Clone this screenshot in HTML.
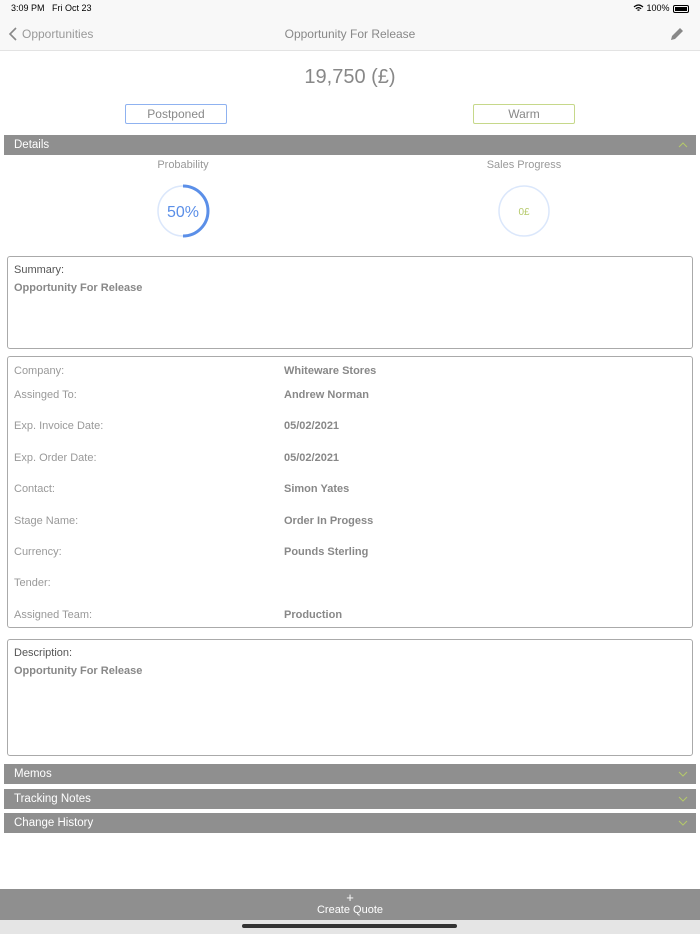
<!DOCTYPE html><html><head><meta charset="utf-8"><style>
*{margin:0;padding:0;box-sizing:border-box}
body{width:700px;height:934px;position:relative;background:#fff;font-family:"Liberation Sans",sans-serif;color:#888;overflow:hidden}
.a{position:absolute}
.bar{position:absolute;left:4px;width:692px;height:20px;background:#8f8f8f;color:#fff;font-size:11.5px;line-height:20px;padding-left:10px}
.box{position:absolute;left:7px;width:686px;border:1px solid #aaa;border-radius:3px}
.lbl{position:absolute;left:14px;font-size:11px;color:#999}
.val{position:absolute;left:284px;font-size:11px;color:#888;font-weight:bold}
.chev{position:absolute;right:8px;top:6px}
</style></head><body>
<div class="a" style="left:0;top:0;width:700px;height:51px;background:#f8f8f8;border-bottom:1px solid #e3e3e3"></div>
<div class="a" style="left:11px;top:3px;font-size:9px;color:#000">3:09 PM&nbsp;&nbsp; Fri Oct 23</div>
<div class="a" style="left:633px;top:3px;font-size:9px;color:#000">
<svg width="11" height="8" viewBox="0 0 11 8" style="vertical-align:-1px"><path d="M1 3Q5.5-1 10 3M2.8 4.8Q5.5 2.4 8.2 4.8M4.5 6.4Q5.5 5.6 6.5 6.4" stroke="#000" fill="none" stroke-width="1.2"/></svg> 100%</div>
<div class="a" style="left:673px;top:5px;width:16px;height:8px;border:1px solid #000;border-radius:2px;padding:1px"><div style="width:100%;height:100%;background:#000"></div></div>
<svg class="a" style="left:8px;top:27px" width="10" height="14"><path d="M8 1L2 7l6 6" stroke="#888" stroke-width="1.6" fill="none"/></svg>
<div class="a" style="left:22px;top:27px;font-size:12px;color:#999">Opportunities</div>
<div class="a" style="left:0;width:700px;top:27px;font-size:12px;text-align:center;color:#888">Opportunity For Release</div>
<svg class="a" style="left:669px;top:26px" width="16" height="16"><path d="M2 14l1-4 8-8 3 3-8 8z" fill="#888"/></svg>
<div class="a" style="left:0;width:700px;top:66px;text-align:center;font-size:20px;color:#888">19,750 (£)</div>
<div class="a" style="left:125px;top:104px;width:102px;height:20px;border:1px solid #8fb2f0;border-radius:2px;text-align:center;font-size:12px;line-height:18px">Postponed</div>
<div class="a" style="left:473px;top:104px;width:102px;height:20px;border:1px solid #c6d88a;border-radius:2px;text-align:center;font-size:12px;line-height:18px">Warm</div>
<div class="bar" style="top:135px">Details<svg class="chev" width="10" height="8"><path d="M1 6l4-4 4 4" stroke="#b5c96a" fill="none"/></svg></div>
<div class="a" style="left:133px;width:100px;top:159px;text-align:center;font-size:11px;color:#999">Probability</div>
<div class="a" style="left:474px;width:100px;top:159px;text-align:center;font-size:11px;color:#999">Sales Progress</div>
<svg class="a" style="left:155px;top:183px" width="56" height="56"><circle cx="28" cy="28" r="25" stroke="#dbe7fb" stroke-width="1.5" fill="none"/><path d="M28 3A25 25 0 0 1 28 53" stroke="#5b8fe8" stroke-width="3" fill="none"/><text x="28" y="34" text-anchor="middle" font-size="16" fill="#5b8fe8" font-family="Liberation Sans">50%</text></svg>
<svg class="a" style="left:496px;top:183px" width="56" height="56"><circle cx="28" cy="28" r="25" stroke="#dbe7fb" stroke-width="1.5" fill="none"/><text x="28" y="32" text-anchor="middle" font-size="10" fill="#b5c96a" font-family="Liberation Sans">0£</text></svg>
<div class="box" style="top:256px;height:93px"></div>
<div class="lbl" style="top:264px;color:#555">Summary:</div>
<div class="val" style="left:14px;top:282px">Opportunity For Release</div>
<div class="box" style="top:356px;height:272px"></div>
<div class="lbl" style="top:365px">Company:</div><div class="val" style="top:365px">Whiteware Stores</div>
<div class="lbl" style="top:389px">Assinged To:</div><div class="val" style="top:389px">Andrew Norman</div>
<div class="lbl" style="top:420px">Exp. Invoice Date:</div><div class="val" style="top:420px">05/02/2021</div>
<div class="lbl" style="top:452px">Exp. Order Date:</div><div class="val" style="top:452px">05/02/2021</div>
<div class="lbl" style="top:483px">Contact:</div><div class="val" style="top:483px">Simon Yates</div>
<div class="lbl" style="top:515px">Stage Name:</div><div class="val" style="top:515px">Order In Progess</div>
<div class="lbl" style="top:546px">Currency:</div><div class="val" style="top:546px">Pounds Sterling</div>
<div class="lbl" style="top:577px">Tender:</div>
<div class="lbl" style="top:609px">Assigned Team:</div><div class="val" style="top:609px">Production</div>
<div class="box" style="top:639px;height:117px"></div>
<div class="lbl" style="top:647px;color:#555">Description:</div>
<div class="val" style="left:14px;top:665px">Opportunity For Release</div>
<div class="bar" style="top:764px">Memos<svg class="chev" width="10" height="8"><path d="M1 2l4 4 4-4" stroke="#b5c96a" fill="none"/></svg></div>
<div class="bar" style="top:789px">Tracking Notes<svg class="chev" width="10" height="8"><path d="M1 2l4 4 4-4" stroke="#b5c96a" fill="none"/></svg></div>
<div class="bar" style="top:813px">Change History<svg class="chev" width="10" height="8"><path d="M1 2l4 4 4-4" stroke="#b5c96a" fill="none"/></svg></div>
<div class="a" style="left:0;top:889px;width:700px;height:31px;background:#8f8f8f;color:#fff;text-align:center;font-size:11px;line-height:12px;padding-top:3px"><div style="font-size:13px">+</div>Create Quote</div>
<div class="a" style="left:0;top:920px;width:700px;height:14px;background:#e5e5e5"></div>
<div class="a" style="left:242px;top:924px;width:215px;height:4px;border-radius:2px;background:#333"></div>
</body></html>
